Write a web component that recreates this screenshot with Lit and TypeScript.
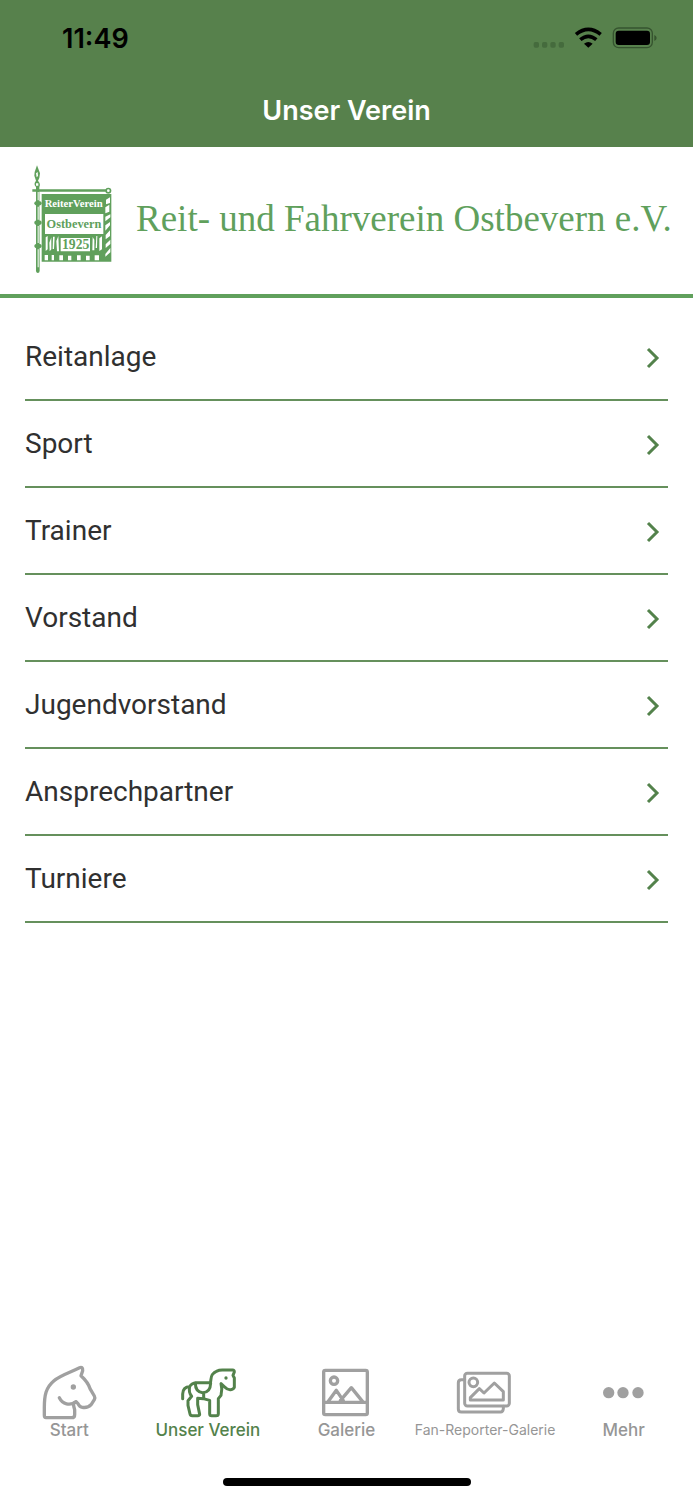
import { LitElement, html, css, svg } from "lit";
import { customElement, property } from "lit/decorators.js";

const entries = ["Reitanlage", "Sport", "Trainer", "Vorstand", "Jugendvorstand", "Ansprechpartner", "Turniere"];

const icons = {
  start: svg`<svg viewBox="27 21 180 180" aria-hidden="true">
    <path d="M48 188Q43 188 43 181V158C43 121 47 98 72 77C91 61 118 53 147 39Q159 33 158 47L153 62C167 75 176 86 180 101L193 123Q196 128 193 134L184 148Q173 160 157 157Q149 156 144 146L138 140L130 145Q131 155 134 164V179Q134 188 125 188Z"/>
    <path d="M88 128C98 148 119 153 138 141"/>
    <circle class="solid" cx="130" cy="96" r="8"/></svg>`,
  verein: svg`<svg class="fine" viewBox="99 21 180 180" aria-hidden="true">
    <path d="M113 131V117Q114 95 134 95Q139 84 154 83H196C200 72 194 58 214 49Q222 45 232 45H263Q268 45 268 51L264 61L268 69V97Q266 103 257 104Q247 105 240 97L228 86Q233 103 228 121L220 131V176Q220 182 213 182H200Q194 182 194 176V136L175 131L158 130V149L164 178Q164 182 158 182H142Q136 182 135 177L129 151V137L140 124Q130 112 134 95"/>
    <path d="M151 84Q151 111 173 113Q196 113 197 84M176 114V130"/>
    <circle class="solid" cx="243" cy="69" r="5"/></svg>`,
  galerie: svg`<svg viewBox="34 21 180 180" aria-hidden="true">
    <rect x="57" y="46" width="131" height="133" rx="5"/>
    <path d="M57 142H188M70 140L95 106L116 137M107 137L140 98L174 140"/>
    <circle cx="88" cy="77" r="11"/></svg>`,
  fan: svg`<svg class="medium" viewBox="150 21 180 180" aria-hidden="true">
    <rect x="179" y="55" width="134" height="98" rx="8"/>
    <path d="M179 74H169Q160 74 160 83V162Q160 171 169 171H287Q294 171 295 161V154"/>
    <circle cx="205" cy="82" r="13"/>
    <path d="M196 135H295V110L268 84L237 114L223 101L196 128Z"/></svg>`,
  mehr: svg`<svg viewBox="11 -24 180 180" aria-hidden="true">
    <circle class="solid" cx="55" cy="68" r="17"/><circle class="solid" cx="98" cy="68" r="17"/><circle class="solid" cx="143" cy="68" r="17"/></svg>`,
};

@customElement("tab-link")
class TabLink extends LitElement {
  @property() label = "";
  @property() icon: keyof typeof icons = "start";
  @property({ type: Boolean }) active = false;
  @property({ type: Boolean }) compact = false;

  static styles = css`
    :host { display: block; flex: 1 1 0; min-width: 0; }
    .tab { display: flex; flex-direction: column; align-items: center; color: #969696; text-decoration: none; font: 500 17px/20px Inter, sans-serif; white-space: nowrap; }
    .active { color: #53824b; }
    .compact { font-size: 14px; font-weight: 400; }
    svg { display: block; width: 60px; height: 60px; margin-bottom: -2px; fill: none; stroke: #a0a0a0; stroke-width: 10; stroke-linejoin: round; stroke-linecap: round; }
    .active svg { stroke: #53824b; }
    .fine { stroke-width: 9; }
    .medium { stroke-width: 9; }
    .solid { fill: #a0a0a0; stroke: none; }
    .active .solid { fill: #53824b; }
  `;

  render() {
    return html`<a href="#${this.icon}" class="tab ${this.active ? "active" : ""} ${this.compact ? "compact" : ""}"
      aria-current=${this.active ? "page" : "false"}>${icons[this.icon]}<span>${this.label}</span></a>`;
  }
}

@customElement("app-root")
class AppRoot extends LitElement {
  static styles = css`
    :host { display: flex; flex-direction: column; min-height: 100vh; background: #fff; color: #303030; font-family: Roboto, sans-serif; }
    .top { background: #57814c; }
    .status { display: flex; justify-content: space-between; align-items: center; height: 76px; padding: 0 36px 0 62px; box-sizing: border-box; color: #000; }
    .time { padding-top: 2px; font: 600 27px/32px Inter, sans-serif; }
    .system { width: 124px; height: 28px; }
    .title { margin: 0; padding: 19px 0 20px; color: #fff; text-align: center; font: 600 27px/32px Inter, sans-serif; }
    .banner { display: flex; align-items: center; gap: 20px; height: 147px; box-sizing: content-box; padding: 0 16px 0 30px; border-bottom: 4px solid #60a05c; color: #60a05c; }
    .crest { flex: none; width: 86px; height: 114px; }
    .club { padding-bottom: 4px; font: 400 37px/44px "Liberation Serif", serif; white-space: nowrap; }
    .list { list-style: none; margin: 0; padding: 16px 25px; }
    .entry { display: flex; align-items: center; justify-content: space-between; height: 85px; padding-right: 8px; border-bottom: 2px solid #65905c; color: inherit; text-decoration: none; font-size: 28px; line-height: 36px; }
    .chevron { width: 14px; height: 22px; margin-top: 2px; fill: none; stroke: #53824b; stroke-width: 3; }
    .tabs { display: flex; margin-top: auto; padding: 0 0 38px; }
    .home { width: 248px; height: 8px; margin: 0 auto 14px; border-radius: 4px; background: #000; }
  `;

  crest() {
    return svg`<svg class="crest" viewBox="30 30 258 342" role="img" aria-label="Reiterverein Ostbevern 1925">
      <g fill="#60a05c">
        <path d="M51 34L60 58L58 72L54 80Q63 90 58 99L59 350Q59 357 53 357Q47 356 48 348V99Q39 90 48 80L43 65L44 54Z"/>
        <path d="M37 106H270V113H37ZM65 120H274V323H65Z"/>
        <circle cx="265" cy="110" r="9"/>
        <ellipse cx="54" cy="148" rx="11" ry="7"/><ellipse cx="54" cy="206" rx="11" ry="7"/><ellipse cx="54" cy="276" rx="11" ry="7"/>
      </g>
      <g fill="#fff">
        <circle cx="265" cy="110" r="4"/><path d="M48 58L53 54L54 66L50 70ZM48 88H55V95H48Z"/>
        <path d="M53 114H56V139H53ZM53 158H56V197H53ZM53 216H56V267H53ZM53 286H56V340H53Z"/>
        <path d="M75 180H250V240H75ZM122 252H210V292H122Z"/>
        <path d="M77 250L83 246V286L77 291ZM88 266L94 250V286L89 292ZM99 248H104L102 285H98ZM109 261L115 246L117 292H111ZM218 249L223 257V289H217ZM229 246H232L231 282H227ZM238 253L246 247V286L238 291Z"/>
        <path d="M74 303H84V319H74ZM95 303H102V319H95ZM118 304H129V319H118ZM144 305H154V319H144ZM171 304H182V319H171ZM198 305H209V319H198ZM224 304H237V319H224ZM258 137L270 130V147L258 151ZM256 160L268 152V173L256 178ZM256 188L271 181V190L256 202ZM256 214L270 204V214L256 230ZM257 243L270 229V246L257 256ZM257 271L271 257V270L257 282ZM256 300L271 282V295L256 308Z"/>
      </g>
      <g font-family="Liberation Serif, serif" font-weight="700" text-anchor="middle">
        <text x="161" y="160" font-size="32" fill="#fff">ReiterVerein</text>
        <text x="162" y="223" font-size="37" fill="#60a05c">Ostbevern</text>
        <text x="167" y="286" font-size="41" fill="#60a05c">1925</text>
      </g></svg>`;
  }

  render() {
    return html`
      <header class="top">
        <div class="status"><span class="time">11:49</span>
          <svg class="system" viewBox="40 27 372 84" aria-hidden="true">
            <g fill="#456b3d"><rect x="42" y="81" width="16" height="17" rx="5"/><rect x="67" y="81" width="16" height="17" rx="5"/><rect x="92" y="81" width="16" height="17" rx="5"/><rect x="117" y="81" width="16" height="17" rx="5"/></g>
            <g fill="none" stroke="#000" stroke-width="11"><path d="M169 58Q206 28 243 58M182 74Q206 54 230 74"/></g>
            <path d="M193 86Q206 76 219 86L206 98Z"/>
            <rect x="281" y="39" width="117" height="59" rx="16" fill="none" stroke="#36542f" stroke-width="4"/>
            <rect x="288" y="47" width="103" height="43" rx="9"/><path d="M404 60Q411 63 411 69Q411 75 404 78Z" fill="#36542f"/>
          </svg>
        </div>
        <h1 class="title">Unser Verein</h1>
      </header>
      <div class="banner">${this.crest()}<span class="club">Reit- und Fahrverein Ostbevern e.V.</span></div>
      <main><ul class="list">
        ${entries.map((name) => html`<li><a class="entry" href="#${name.toLowerCase()}"><span>${name}</span>
          <svg class="chevron" viewBox="0 0 14 22" aria-hidden="true"><path d="M2 2L11 11L2 20"/></svg></a></li>`)}
      </ul></main>
      <nav class="tabs" aria-label="Hauptnavigation">
        <tab-link icon="start" label="Start"></tab-link>
        <tab-link icon="verein" label="Unser Verein" active></tab-link>
        <tab-link icon="galerie" label="Galerie"></tab-link>
        <tab-link icon="fan" label="Fan-Reporter-Galerie" compact></tab-link>
        <tab-link icon="mehr" label="Mehr"></tab-link>
      </nav>
      <div class="home"></div>`;
  }
}
